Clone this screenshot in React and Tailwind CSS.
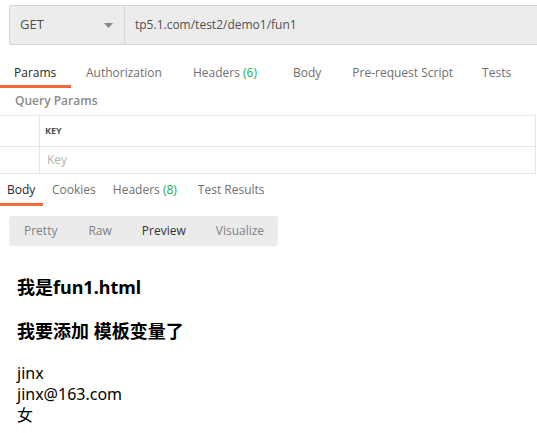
import React from 'react';

const font = { fontFamily: '"Open Sans", "Noto Sans CJK SC", sans-serif' };

const Tab = ({ label, count, active, className = '' }) => (
  <div className={`relative flex h-full items-center ${className}`}>
    <span className={active ? 'text-[#282828]' : 'text-[#707070]'}>
      {label}
      {count !== undefined && <span className="text-[#26a65b]"> ({count})</span>}
    </span>
    {active && <div className="absolute bottom-0 left-0 right-0 h-[3px] bg-[#f26b3a]" />}
  </div>
);

const App = () => {
  return (
    <div className="w-[537px] h-[433px] overflow-hidden bg-white text-[12px]" style={font}>
      {/* request bar */}
      <div className="pt-[5px] pl-[9px]">
        <div className="flex h-[40px] border border-r-0 border-[#d6d6d6] rounded-l-[3px] bg-[#ececec]">
          <div className="flex w-[115px] items-center justify-between border-r border-[#d6d6d6] pl-[10px] pr-[11px]">
            <span className="text-[13px] text-[#505050]">GET</span>
            <svg width="9" height="5" viewBox="0 0 9 5"><path d="M0 0h9L4.5 5z" fill="#8a8a8a" /></svg>
          </div>
          <div className="flex items-center pl-[10px] text-[12px] text-[#505050]">tp5.1.com/test2/demo1/fun1</div>
        </div>
      </div>

      {/* request tabs */}
      <div className="mt-[13px] flex h-[30px] items-center">
        <Tab label="Params" active className="w-[71px] pl-[14px]" />
        <Tab label="Authorization" className="ml-[15px]" />
        <Tab label="Headers" count={6} className="ml-[31px]" />
        <Tab label="Body" className="ml-[36px]" />
        <Tab label="Pre-request Script" className="ml-[31px]" />
        <Tab label="Tests" className="ml-[29px]" />
      </div>

      <div className="pl-[15px] pt-[4px] h-[27px] text-[12px] font-semibold text-[#8a8a8a]">Query Params</div>

      {/* table */}
      <div className="mr-[1px] border-t border-r border-[#e6e6e6]">
        <div className="flex h-[31px] border-b border-[#e6e6e6]">
          <div className="w-[40px] border-r border-[#e6e6e6]" />
          <div className="flex items-center pl-[5px] text-[9px] font-bold text-[#505050]">KEY</div>
        </div>
        <div className="flex h-[27px] border-b border-[#e6e6e6]">
          <div className="w-[40px] border-r border-[#e6e6e6]" />
          <div className="flex items-center pl-[7px] text-[12px] text-[#b3b3b3]">Key</div>
        </div>
      </div>

      {/* response tabs */}
      <div className="flex h-[32px] items-center">
        <Tab label="Body" active className="w-[43px] pl-[7px]" />
        <Tab label="Cookies" className="ml-[9px]" />
        <Tab label="Headers" count={8} className="ml-[17px]" />
        <Tab label="Test Results" className="ml-[21px]" />
      </div>

      {/* view mode */}
      <div className="mt-[10px] ml-[9px] flex h-[30px] w-[269px] items-center rounded-[3px] bg-[#ebebeb] text-[12px] text-[#808080]">
        <span className="ml-[15px]">Pretty</span>
        <span className="ml-[31px]">Raw</span>
        <span className="ml-[30px] text-[#333333]">Preview</span>
        <span className="ml-[30px]">Visualize</span>
      </div>

      {/* preview */}
      <div className="pl-[17px] pt-[29px] text-black" style={{ fontFamily: '"Noto Sans", "Noto Sans CJK SC", sans-serif' }}>
        <h1 className="text-[18px] font-bold leading-[24px]">我是fun1.html</h1>
        <h2 className="mt-[20px] text-[18px] font-bold leading-[24px]">我要添加 模板变量了</h2>
        <div className="mt-[20px] text-[16px] leading-[21px]">
          <div>jinx</div>
          <div>jinx@163.com</div>
          <div>女</div>
        </div>
      </div>
    </div>
  );
};

export default App;
